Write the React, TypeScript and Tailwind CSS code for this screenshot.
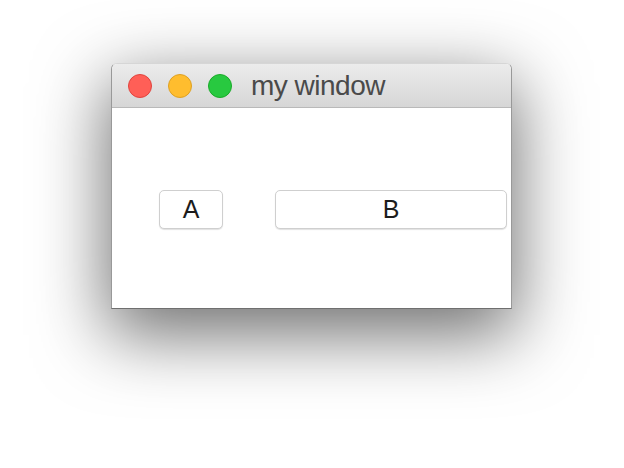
const FONT = { fontFamily: '"Liberation Sans", Arial, sans-serif' };

function TrafficLight({ fill, ring }: { fill: string; ring: string }) {
  return <span className={`block h-[24px] w-[24px] rounded-full border ${fill} ${ring}`} />;
}

export default function App() {
  return (
    <div className="h-[468px] w-[624px] overflow-hidden bg-white pt-[63px]" style={FONT}>
      <div className="ml-[111px] flex h-[246px] w-[401px] flex-col overflow-hidden rounded-t-[6px] border border-[#999999] border-t-[#d6d6d6] border-b-[#6f6f6f] bg-white shadow-[0_22px_70px_4px_rgba(0,0,0,0.56)]">
        <div className="flex h-[44px] shrink-0 items-center border-b border-[#b9b9b9] bg-gradient-to-b from-[#ececec] to-[#d6d6d6] pl-[16px]">
          <div className="flex gap-[16px]">
            <TrafficLight fill="bg-[#ff5f57]" ring="border-[#e0443e]" />
            <TrafficLight fill="bg-[#ffbd2e]" ring="border-[#dea123]" />
            <TrafficLight fill="bg-[#28c940]" ring="border-[#1aab29]" />
          </div>
          <span className="ml-[19px] text-[28px] leading-none tracking-[-0.5px] text-[#4a4a4a]">my window</span>
        </div>
        <div className="flex flex-1 items-center gap-[52px] pl-[47px] pt-[2px]">
          <button className="h-[39px] w-[64px] rounded-[5px] border border-[#cfcfcf] bg-white text-[25px] text-[#1c1c1c] shadow-[0_1px_1px_rgba(0,0,0,0.12)]">
            A
          </button>
          <button className="h-[39px] w-[232px] rounded-[5px] border border-[#cfcfcf] bg-white text-[25px] text-[#1c1c1c] shadow-[0_1px_1px_rgba(0,0,0,0.12)]">
            B
          </button>
        </div>
      </div>
    </div>
  );
}
